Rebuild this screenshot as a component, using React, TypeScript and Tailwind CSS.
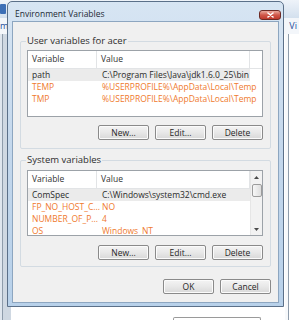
import React from "react"

type Row = { name: string; value: string; orange?: boolean; selected?: boolean }

const userRows: Row[] = [
  { name: "path", value: "C:\\Program Files\\Java\\jdk1.6.0_25\\bin", selected: true },
  { name: "TEMP", value: "%USERPROFILE%\\AppData\\Local\\Temp", orange: true },
  { name: "TMP", value: "%USERPROFILE%\\AppData\\Local\\Temp", orange: true },
]

const systemRows: Row[] = [
  { name: "ComSpec", value: "C:\\Windows\\system32\\cmd.exe", selected: true },
  { name: "FP_NO_HOST_C...", value: "NO", orange: true },
  { name: "NUMBER_OF_P...", value: "4", orange: true },
  { name: "OS", value: "Windows_NT", orange: true },
]

function Btn({ label }: { label: string }) {
  return (
    <div className="w-[51px] h-[15px] rounded-[2px] border border-[#8a8a8a] bg-linear-to-b from-[#f4f4f4] via-[#e8e8e8] to-[#d8d8d8] shadow-[inset_0_0_0_1px_#fbfbfb] flex items-center justify-center text-[#262626] leading-[13px]">
      {label}
    </div>
  )
}

function ScrollBar() {
  return (
    <div className="w-[12px] shrink-0 flex flex-col items-center bg-[#f2f2f2] border-l border-[#e6e6e6]">
      <div className="h-[13px] flex items-center justify-center">
        <svg width="5" height="3" viewBox="0 0 5 3">
          <path d="M0 3 L2.5 0 L5 3 Z" fill="#4a4a4a" />
        </svg>
      </div>
      <div className="w-[10px] h-[13px] rounded-[2px] border border-[#9c9c9c] bg-linear-to-r from-[#f7f7f7] to-[#dedede]" />
      <div className="flex-1" />
      <div className="h-[12px] flex items-center justify-center">
        <svg width="5" height="3" viewBox="0 0 5 3">
          <path d="M0 0 L2.5 3 L5 0 Z" fill="#4a4a4a" />
        </svg>
      </div>
    </div>
  )
}

function VarList({ rows, scroll, h }: { rows: Row[]; scroll?: boolean; h: string }) {
  return (
    <div className={`ml-[6px] mr-[7px] ${h} shrink-0 border border-[#9ca2a8] bg-white flex overflow-hidden`}>
      <div className="flex-1 flex flex-col min-w-0">
        <div className="h-[18px] shrink-0 flex border-b border-[#e2e4e6] text-[#333]">
          <div className="w-[69px] shrink-0 pl-[4px] flex items-center border-r border-[#e2e4e6]">Variable</div>
          <div className="w-[153px] shrink-0 pl-[4px] flex items-center border-r border-[#e2e4e6]">Value</div>
        </div>
        {rows.map((r) => (
          <div
            key={r.name}
            className={`h-[12px] shrink-0 w-[222px] flex items-center leading-[12px] ${r.selected ? "bg-[#ebebeb]" : ""} ${
              r.orange ? "text-[#ef7a2e]" : "text-[#2a2a2a]"
            }`}
          >
            <div className="w-[69px] shrink-0 pl-[4px] whitespace-nowrap">{r.name}</div>
            <div className="pl-[5px] whitespace-nowrap">{r.value}</div>
          </div>
        ))}
      </div>
      {scroll && <ScrollBar />}
    </div>
  )
}

function Group({ title, h, children }: { title: string; h: string; children: React.ReactNode }) {
  return (
    <div className={`${h} shrink-0 border border-[#d3dbe2] rounded-[2px] flex flex-col`}>
      <div className="-mt-[7px] ml-[5px] px-[1px] self-start h-[12px] leading-[12px] bg-[#f0f0f0] text-[#2e2e2e] text-[9.5px]">
        {title}
      </div>
      {children}
    </div>
  )
}

function Background() {
  return (
    <div className="w-full h-full flex flex-col">
      <div className="h-[18px] shrink-0 flex items-center bg-linear-to-b from-[#eef3f9] to-[#d3e0ee]">
        <div className="w-[6px] h-[10px] bg-[#3d6fb6] rounded-[1px]" />
      </div>
      <div className="h-[16px] shrink-0 flex items-center justify-between bg-[#f3f6fa] text-[#1f4f9c] text-[9px]">
        <span className="ml-[0px]">m</span>
        <span className="mr-[2px]">Vi</span>
      </div>
      <div className="flex-1 flex">
        <div className="w-[11px] shrink-0 bg-[#cfd8e2] flex">
          <div className="w-[3px] bg-[#dfe6ee] border-r border-[#8e9cab]" />
        </div>
        <div className="flex-1 bg-white flex flex-col justify-end items-end">
          <div className="mr-[24px] w-[88px] h-[3px] border-t border-x border-[#9a9a9a] rounded-t-[2px]" />
        </div>
        <div className="w-[14px] shrink-0 bg-[#e4eaf1] flex">
          <div className="w-[4px] bg-[#f7f9fb] border-r border-[#8e9cab]" />
          <div className="flex-1 bg-white" />
        </div>
      </div>
    </div>
  )
}

function Dialog() {
  return (
    <div className="absolute left-[7px] top-[1px] w-[277px] h-[306px] border border-[#5b7089] rounded-t-[5px] bg-linear-to-b from-[#d7e5f3] via-[#c3d7ec] to-[#b8d1ea] flex flex-col px-[4px] pb-[3px]">
      <div className="h-[19px] shrink-0 flex items-center justify-between">
        <span className="ml-[3px] mt-[6px] text-[8.5px] text-[#1e2a36]">Environment Variables</span>
        <div className="-mr-[2px] mt-[6px] w-[22px] h-[10px] rounded-[3px] border border-[#6e2a24] bg-linear-to-b from-[#e9a89c] via-[#d0584a] to-[#c0392b] flex items-center justify-center">
          <svg width="7" height="6" viewBox="0 0 7 6">
            <path d="M1 1 L6 5 M6 1 L1 5" stroke="#ffffff" strokeWidth="1.6" strokeLinecap="round" />
          </svg>
        </div>
      </div>
      <div className="flex-1 border border-[#8da6c0] bg-[#f0f0f0] flex flex-col pl-[7px] pr-[7px]">
        <div className="mt-[19px]">
          <Group title="User variables for acer" h="h-[108px]">
            <div className="mt-[3px]" />
            <VarList rows={userRows} h="h-[67px]" />
            <div className="mt-[8px] mr-[7px] flex justify-end gap-[6px]">
              <Btn label="New..." />
              <Btn label="Edit..." />
              <Btn label="Delete" />
            </div>
          </Group>
        </div>
        <div className="mt-[11px]">
          <Group title="System variables" h="h-[107px]">
            <div className="mt-[4px]" />
            <VarList rows={systemRows} scroll h="h-[66px]" />
            <div className="mt-[9px] mr-[7px] flex justify-end gap-[6px]">
              <Btn label="New..." />
              <Btn label="Edit..." />
              <Btn label="Delete" />
            </div>
          </Group>
        </div>
        <div className="mt-[12px] flex justify-end gap-[6px]">
          <Btn label="OK" />
          <Btn label="Cancel" />
        </div>
      </div>
    </div>
  )
}

export default function App() {
  return (
    <div className="relative w-[299px] h-[320px] overflow-hidden bg-white font-['Open_Sans',sans-serif] text-[8.5px]">
      <Background />
      <Dialog />
    </div>
  )
}
